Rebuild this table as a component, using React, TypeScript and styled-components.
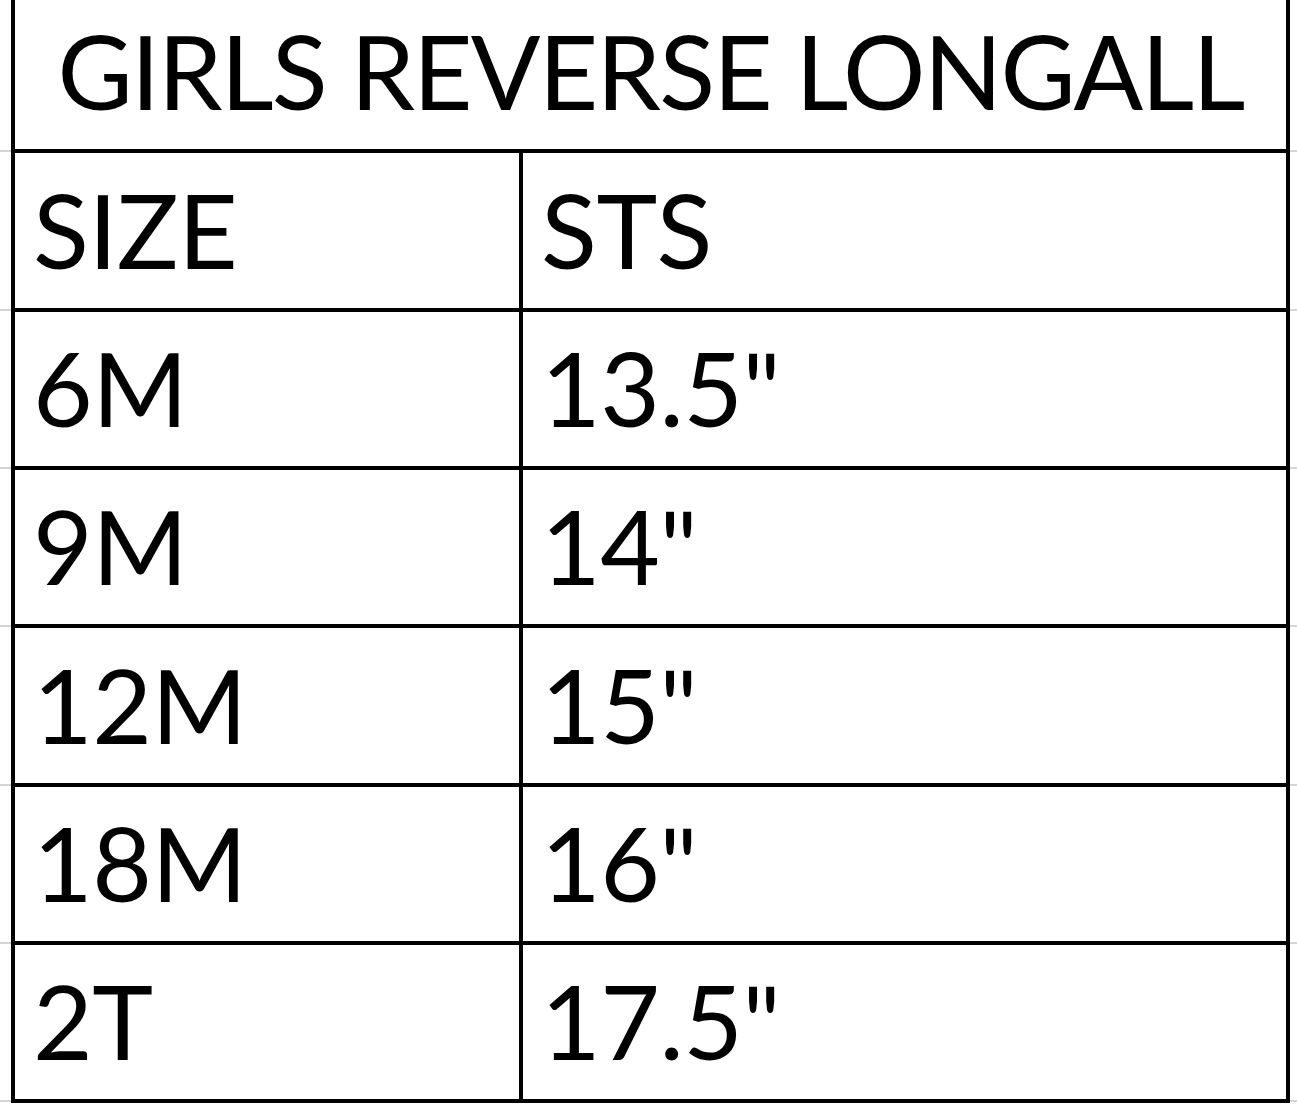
import styled, { createGlobalStyle } from "styled-components";

const GlobalStyle = createGlobalStyle`
  html, body {
    margin: 0;
    padding: 0;
    background: #ffffff;
  }
  body {
    font-family: Lato, "Open Sans", "Liberation Sans", sans-serif;
    color: #000;
  }
`;

const Sheet = styled.div`
  width: 1297px;
  display: flex;
  flex-direction: column;
`;

const Row = styled.div<{ height: number }>`
  display: flex;
  height: ${({ height }) => height}px;
`;

// the faint spreadsheet gridline that runs past the table edge
const Gutter = styled.div<{ width: number }>`
  width: ${({ width }) => width}px;
  flex-shrink: 0;
  align-self: flex-end;
  height: 2px;
  margin-bottom: 1px;
  background: #d4d4d4;
`;

const Cells = styled.div<{ single?: boolean }>`
  display: grid;
  grid-template-columns: ${({ single }) => (single ? "1fr" : "504px 4px 763px")};
  width: 1279px;
  flex-shrink: 0;
  border-left: 4px solid #000;
  border-right: 4px solid #000;
  border-bottom: 4px solid #000;
  box-sizing: border-box;
`;

const Divider = styled.div`
  background: #000;
`;

const Cell = styled.div<{ center?: boolean }>`
  display: flex;
  align-items: flex-end;
  justify-content: ${({ center }) => (center ? "center" : "flex-start")};
  padding: 0 0 27px ${({ center }) => (center ? "0" : "18px")};
  font-size: 103px;
  line-height: 1;
  letter-spacing: ${({ center }) => (center ? "-1.8px" : "-0.5px")};
  white-space: nowrap;
`;

const rows = [
  ["SIZE", "STS"],
  ["6M", '13.5"'],
  ["9M", '14"'],
  ["12M", '15"'],
  ["18M", '16"'],
  ["2T", '17.5"'],
];

export default function App() {
  return (
    <>
      <GlobalStyle />
      <Sheet>
        <Row height={153}>
          <Gutter width={11} />
          <Cells single>
            <Cell center>GIRLS REVERSE LONGALL</Cell>
          </Cells>
          <Gutter width={7} />
        </Row>
        {rows.map(([size, sts], i) => (
          <Row key={size} height={i % 3 === 2 ? 158 : 158.5}>
            <Gutter width={11} />
            <Cells>
              <Cell>{size}</Cell>
              <Divider />
              <Cell>{sts}</Cell>
            </Cells>
            <Gutter width={7} />
          </Row>
        ))}
      </Sheet>
    </>
  );
}
